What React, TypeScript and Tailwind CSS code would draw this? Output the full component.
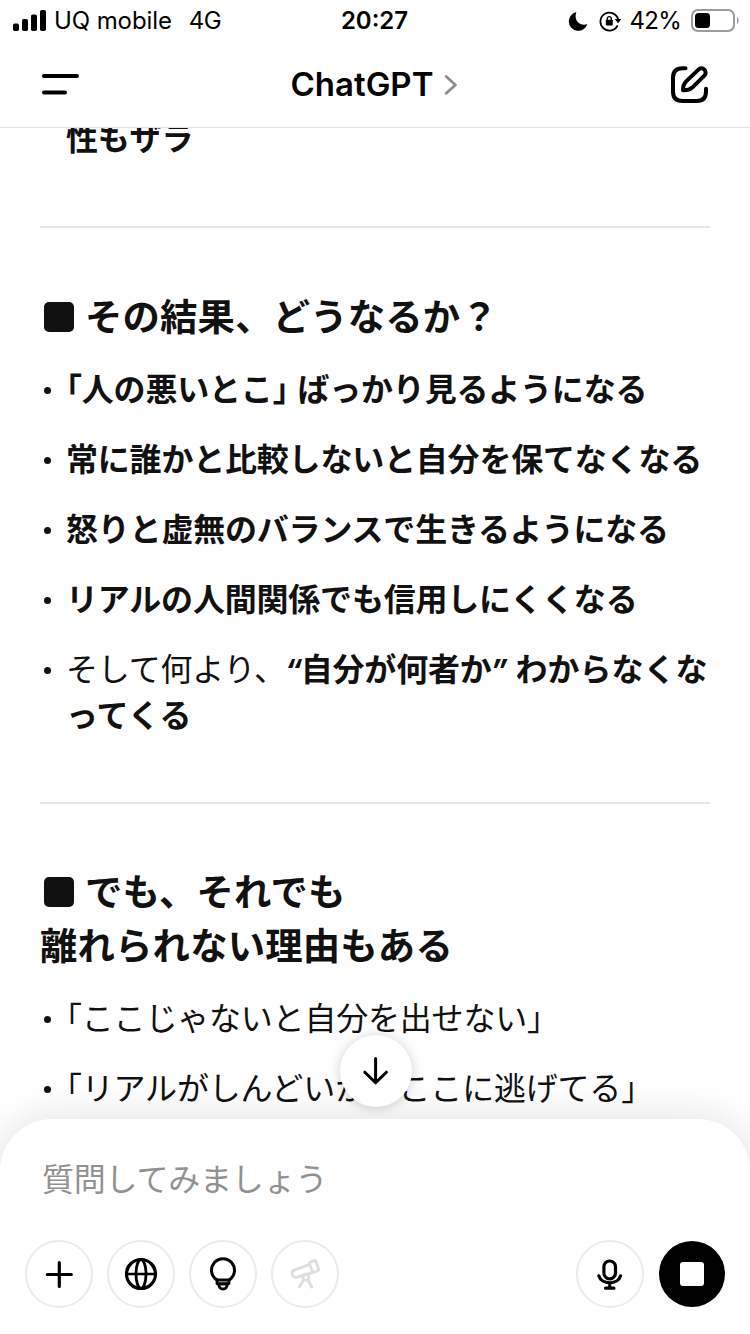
import type { ReactNode } from "react";

const results: ReactNode[] = [
  <>
    <Half>「</Half>人の悪いとこ<Half>」</Half>
    <span className="ml-[9px]">ばっかり見るようになる</span>
  </>,
  "常に誰かと比較しないと自分を保てなくなる",
  "怒りと虚無のバランスで生きるようになる",
  "リアルの人間関係でも信用しにくくなる",
  <>
    <span className="font-normal">そして何より、</span>
    <Quote>“</Quote>自分が何者か<Quote>”</Quote>
    <span className="ml-[9px] tracking-normal">わからなくな</span>
    <br />
    <span className="tracking-[0.2px]">ってくる</span>
  </>,
];

const reasons: ReactNode[] = [
  <>
    <Half>「</Half>ここじゃないと自分を出せない<Half>」</Half>
  </>,
  <>
    <Half>「</Half>リアルがしんどいからここに逃げてる<Half>」</Half>
  </>,
];

// half-width brackets
function Half({ children }: { children: ReactNode }) {
  return <span className="[font-feature-settings:'halt']">{children}</span>;
}

function Quote({ children }: { children: ReactNode }) {
  return (
    <span className="-ml-px inline-block w-[16px] pr-[4px] text-center font-['Inter'] text-[30px] italic leading-none">
      {children}
    </span>
  );
}

function StatusBar() {
  return (
    <div className="flex h-[41px] items-center justify-between pl-[13px] pr-[11px] text-[24px]">
      <div className="flex w-[300px] items-center">
        <svg width="34" height="22" viewBox="0 0 34 22">
          <rect x="0" y="13.5" width="6" height="7.5" rx="1.8" />
          <rect x="9" y="9" width="6" height="12" rx="1.8" />
          <rect x="18" y="4.5" width="6" height="16.5" rx="1.8" />
          <rect x="27" y="0" width="6" height="21" rx="1.8" />
        </svg>
        <span className="ml-[7px] tracking-[-0.1px]">UQ mobile</span>
        <span className="ml-[17px] tracking-[-0.5px]">4G</span>
      </div>
      <span className="pr-[3px] font-semibold">20:27</span>
      <div className="flex w-[300px] items-center justify-end">
        <svg width="20" height="20" viewBox="0 0 20 20">
          <path d="M8.4 1A9.5 9.5 0 1 0 19.4 13C12 16 5.2 9 8.4 1Z" />
        </svg>
        <svg className="ml-[11px]" width="22" height="22" viewBox="0 0 22 22" fill="none" stroke="black" strokeWidth="1.8">
          <path d="M18.6 15.4A9 9 0 1 1 19.2 9.5" />
          <path d="M15.8 9h6.4l-3.1 4.2Z" fill="black" stroke="none" />
          <rect x="6.8" y="9.8" width="7" height="5.8" rx="0.8" fill="black" stroke="none" />
          <path d="M8.3 10.4V8.6a2 2 0 0 1 4 0v1.8" strokeWidth="1.4" />
        </svg>
        <span className="ml-[8px] tracking-[-0.7px]">42%</span>
        <svg className="-mr-px ml-[10px]" width="49" height="24" viewBox="0 0 49 24">
          <rect x="1" y="1" width="42" height="21" rx="6" fill="none" stroke="#9b9b9b" strokeWidth="2" />
          <rect x="4" y="4" width="15" height="15" rx="3.5" />
          <path d="M46 8c2.2 1.2 2.2 6 0 7.2Z" fill="#9b9b9b" />
        </svg>
      </div>
    </div>
  );
}

function Header() {
  return (
    <div className="flex h-[86px] items-center justify-between pl-[40px] pr-[40px]">
      <svg width="41" height="30" viewBox="0 0 41 30" stroke="black" strokeWidth="4" strokeLinecap="round">
        <path d="M4 7h33M4 23.5h21" />
      </svg>
      <div className="flex items-center">
        <span className="pt-px text-[33px] font-semibold">ChatGPT</span>
        <svg className="ml-[10px]" width="16" height="22" viewBox="0 0 16 22" fill="none" stroke="#8e8e8e" strokeWidth="2.8" strokeLinecap="round" strokeLinejoin="round">
          <path d="M3.2 3.5 12.4 12l-9.2 8.3" />
        </svg>
      </div>
      <svg width="41" height="41" viewBox="0 0 41 41" fill="none" stroke="black" strokeWidth="4" strokeLinecap="round" strokeLinejoin="round">
        <path d="M16.5 4.2H13.5Q4 4.2 4 13.7V27.5Q4 37 13.5 37H27.5Q37 37 37 27.5V24.7" />
        <path d="M14 26.3C13.9 22.3 15 19.5 17.2 17.3L29.4 5.6a4.2 4.2 0 0 1 6 6L23.2 23.6C21 25.6 18 26.5 14 26.3Z" />
      </svg>
    </div>
  );
}

function Heading({ children }: { children: ReactNode }) {
  return (
    <h2 className="text-[37.4px] font-bold leading-[54px] tracking-[0.15px]">
      <span className="ml-[4px] mr-[11px] inline-block size-[30px] rounded-[5px] bg-[#111] align-[-1px]" />
      {children}
    </h2>
  );
}

function List({ items }: { items: ReactNode[] }) {
  return (
    <ul className="mt-[21px] flex flex-col gap-6">
      {items.map((item, idx) => (
        <li key={idx} className="flex h-[46px] leading-[46px] last:h-auto">
          <span className="ml-[4px] mr-[15px] mt-[21px] size-[7px] shrink-0 rounded-full bg-[#111]" />
          <div className="whitespace-nowrap pt-px">{item}</div>
        </li>
      ))}
    </ul>
  );
}

function ToolButton({ children }: { children: ReactNode }) {
  return (
    <button className="flex size-[68px] items-center justify-center rounded-full border-2 border-[#ebebeb]">
      <svg className="shrink-0" width="36" height="36" viewBox="0 0 36 36" fill="none" stroke="black" strokeWidth="3.2" strokeLinecap="round" strokeLinejoin="round">
        {children}
      </svg>
    </button>
  );
}

function Composer() {
  return (
    <div className="relative h-[215px] shrink-0 rounded-t-[52px] bg-white px-[25px] pt-[38px] shadow-[0_0_44px_rgba(0,0,0,0.13)]">
      <p className="pl-[17px] text-[32px] leading-[46px] tracking-[-0.2px] text-[#919191]">
        質問してみましょう
      </p>
      <div className="mt-[37px] flex items-center gap-[14px]">
        <ToolButton>
          <path d="M18.3 6.5v24M6.3 18.5h24" />
        </ToolButton>
        <ToolButton>
          <circle cx="18" cy="18" r="14.5" />
          <ellipse cx="18" cy="18" rx="5" ry="14.5" strokeWidth="2.8" />
          <path d="M4 18h28" strokeWidth="2.6" />
        </ToolButton>
        <ToolButton>
          <path d="M12 24A11.5 11.5 0 1 1 24 24Z" strokeWidth="3" />
          <path d="M12 24v3.6h12v-3.6" strokeWidth="2.8" />
          <path d="M13.5 28.2C14 31 15.6 33 18 33s4-2 4.5-4.8Z" strokeWidth="2.8" />
        </ToolButton>
        <ToolButton>
          <g stroke="#dedede" strokeWidth="2.9">
            <path d="M22.5 8.3 7.2 14.2Q4.2 15.5 5.3 18.5T9.5 21.3L26 16.5" />
            <path d="M23.9 5.9 26.5 4.8Q28.4 4.1 29.1 6L31.4 12.5Q32 14.3 30.2 15L28 15.9Q26.2 16.4 25.4 14.8L22.5 8.5Q21.9 6.7 23.9 5.9Z" />
            <circle cx="18.8" cy="21.2" r="3" />
            <path d="m16.7 23.8-4.5 7.3M21 23.8l3.7 7.3" />
          </g>
        </ToolButton>
        <div className="ml-auto flex items-center gap-[15px]">
          <ToolButton>
            <rect x="11.9" y="5" width="11.6" height="17.8" rx="5.8" />
            <path d="M6.8 19.8c1.3 4.5 5.8 7 10.9 7s9.6-2.5 10.9-7M17.7 27v5M13.5 32.2h8.4" />
          </ToolButton>
          <button className="flex size-[66px] items-center justify-center rounded-full bg-black">
            <span className="size-6 rounded-[3px] bg-white" />
          </button>
        </div>
      </div>
      <button className="absolute left-[340px] top-[-84px] flex size-[72px] items-center justify-center rounded-full bg-white shadow-[0_1px_12px_rgba(0,0,0,0.2)]">
        <svg width="36" height="36" viewBox="0 0 36 36" fill="none" stroke="black" strokeWidth="3" strokeLinecap="round" strokeLinejoin="round">
          <path d="M17.6 5.5v24M6.8 19.2l10.8 10.6 10.8-10.6" />
        </svg>
      </button>
    </div>
  );
}

export default function App() {
  return (
    <main
      lang="ja"
      className="flex h-[1334px] w-[750px] flex-col overflow-hidden bg-white font-['Inter','Noto_Sans_CJK_JP',sans-serif] text-black"
    >
      <StatusBar />
      <Header />
      <div className="min-h-0 flex-1 overflow-hidden border-t border-[#e2e2e2] px-[40px] text-[32px] font-bold tracking-[-0.2px] text-[#111]">
        <p className="-mt-[12px] pl-[26px] leading-[46px]">性もザラ</p>
        <hr className="mt-[64px] border-t-2 border-[#e6e6e6]" />
        <section className="mt-[63px]">
          <Heading>その結果、どうなるか？</Heading>
          <List items={results} />
        </section>
        <hr className="mt-[63px] border-t-2 border-[#e6e6e6]" />
        <section className="mt-[62px]">
          <Heading>
            でも、それでも
            <br />
            離れられない理由もある
          </Heading>
          <div className="font-normal">
            <List items={reasons} />
          </div>
        </section>
      </div>
      <Composer />
    </main>
  );
}
